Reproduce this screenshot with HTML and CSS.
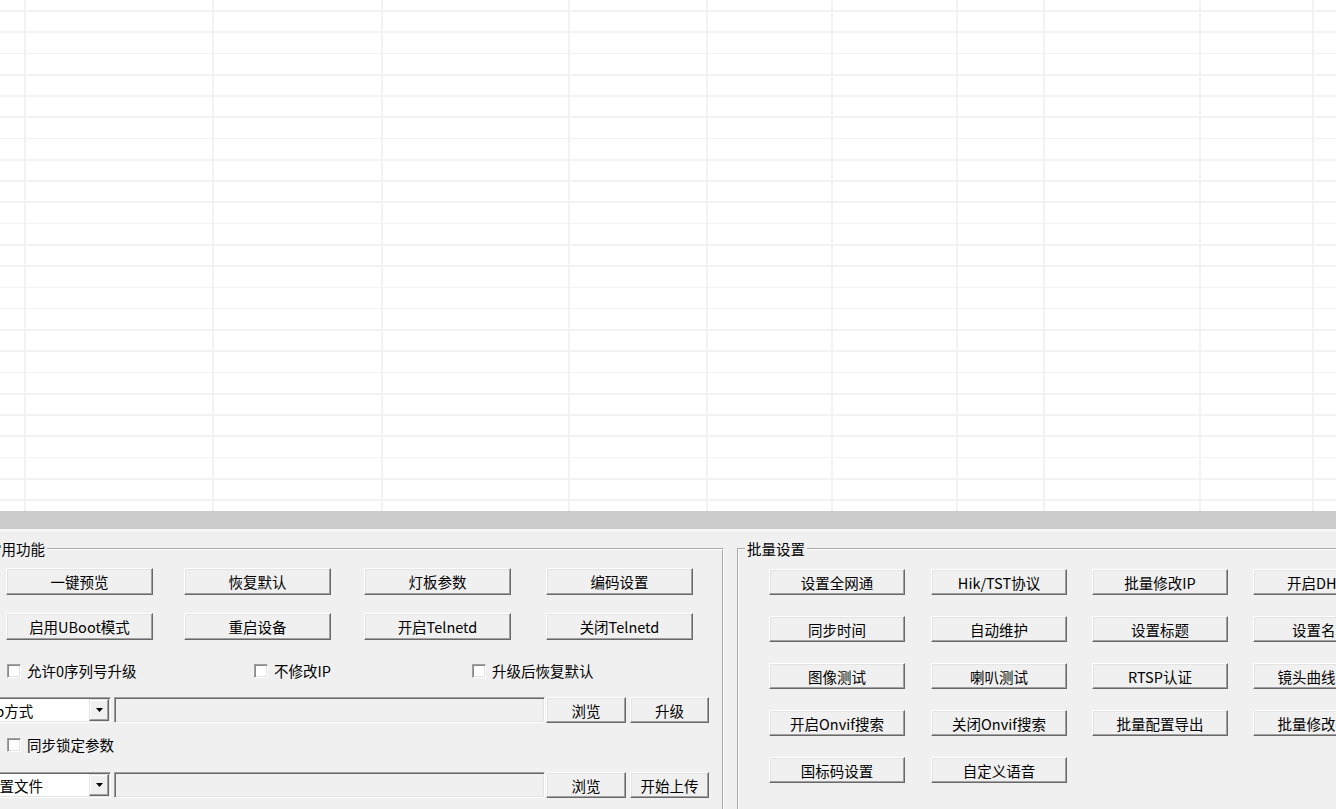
FILE: index.html
```html
<!DOCTYPE html>
<html lang="zh-CN">
<head>
<meta charset="utf-8">
<title>批量设置</title>
<link rel="stylesheet" href="styles.css">
</head>
<body>
<div class="app">
  <div class="list">
    <div class="col c1"></div>
    <div class="col c2"></div>
    <div class="col c3"></div>
    <div class="col c4"></div>
    <div class="col c5"></div>
    <div class="col c6"></div>
    <div class="col c7"></div>
    <div class="col c8"></div>
    <div class="col c9"></div>
    <div class="col c10"></div>
    <div class="col c11"></div>
  </div>
  <div class="splitter"></div>
  <div class="panel">
    <fieldset class="group group-common">
      <legend>常用功能</legend>
      <div class="common-grid">
        <button class="btn">一键预览</button>
        <button class="btn">恢复默认</button>
        <button class="btn">灯板参数</button>
        <button class="btn">编码设置</button>
        <button class="btn">启用UBoot模式</button>
        <button class="btn">重启设备</button>
        <button class="btn">开启Telnetd</button>
        <button class="btn">关闭Telnetd</button>
      </div>
      <div class="check-row check-row-top">
        <label class="check"><input type="checkbox" class="box">允许0序列号升级</label>
        <label class="check"><input type="checkbox" class="box">不修改IP</label>
        <label class="check"><input type="checkbox" class="box">升级后恢复默认</label>
      </div>
      <div class="file-row file-row-upgrade">
        <div class="combo"><span class="combo-text">ftp方式</span><span class="combo-btn"><svg width="7" height="4" viewBox="0 0 7 4"><path d="M0 0H7L3.5 4Z" fill="#000"/></svg></span></div>
        <div class="field"></div>
        <button class="btn btn-browse">浏览</button>
        <button class="btn btn-action">升级</button>
      </div>
      <div class="check-row check-row-lock">
        <label class="check"><input type="checkbox" class="box">同步锁定参数</label>
      </div>
      <div class="file-row file-row-upload">
        <div class="combo"><span class="combo-text">配置文件</span><span class="combo-btn"><svg width="7" height="4" viewBox="0 0 7 4"><path d="M0 0H7L3.5 4Z" fill="#000"/></svg></span></div>
        <div class="field"></div>
        <button class="btn btn-browse">浏览</button>
        <button class="btn btn-action">开始上传</button>
      </div>
    </fieldset>
    <fieldset class="group group-batch">
      <legend>批量设置</legend>
      <div class="batch-grid">
        <button class="btn">设置全网通</button>
        <button class="btn">Hik/TST协议</button>
        <button class="btn">批量修改IP</button>
        <button class="btn">开启DHCP</button>
        <button class="btn">同步时间</button>
        <button class="btn">自动维护</button>
        <button class="btn">设置标题</button>
        <button class="btn">设置名称</button>
        <button class="btn">图像测试</button>
        <button class="btn">喇叭测试</button>
        <button class="btn">RTSP认证</button>
        <button class="btn">镜头曲线校正</button>
        <button class="btn">开启Onvif搜索</button>
        <button class="btn">关闭Onvif搜索</button>
        <button class="btn">批量配置导出</button>
        <button class="btn">批量修改密码</button>
        <button class="btn">国标码设置</button>
        <button class="btn">自定义语音</button>
      </div>
    </fieldset>
  </div>
</div>
</body>
</html>
```

FILE: styles.css
```css
html, body {
  margin: 0;
  padding: 0;
}

body {
  width: 1336px;
  height: 809px;
  overflow: hidden;
  background: #f0f0f0;
  color: #000;
  font-family: "Noto Sans CJK SC", "Noto Sans", sans-serif;
  font-size: 14.5px;
  line-height: 17px;
}

.app {
  width: 1336px;
  height: 809px;
  overflow: hidden;
}

/* ---------- list view ---------- */
.list {
  height: 511px;
  display: flex;
  background-color: #ffffff;
  background-image: repeating-linear-gradient(
    to bottom,
    #f2f2f2 -11.27px,
    #f2f2f2 -9.57px,
    transparent -9.57px,
    transparent 10px
  );
}

.col {
  flex: none;
  box-sizing: border-box;
  border-right: 2px solid #f2f2f2;
}

.c1 { width: 26px; }
.c2 { width: 188px; }
.c3 { width: 169px; }
.c4 { width: 187px; }
.c5 { width: 138px; }
.c6 { width: 125px; }
.c7 { width: 125px; }
.c8 { width: 87px; }
.c9 { width: 156px; }
.c10 { width: 113px; }
.c11 { flex: 1; border-right: none; }

/* ---------- splitter ---------- */
.splitter {
  height: 18px;
  background: #cbcbcb;
}

/* ---------- bottom panel ---------- */
.panel {
  display: flex;
  align-items: flex-start;
  height: 280px;
  box-sizing: border-box;
  border-top: 3px solid #f6f6f6;
  padding-top: 8px;
  overflow: hidden;
}

.group {
  flex: none;
  margin: 0;
  padding: 0;
  min-width: 0;
  box-sizing: border-box;
  height: 420px;
  border: 2px groove #ffffff;
}

.group legend {
  margin-left: 6px;
  padding: 0 2px;
  line-height: 17px;
  height: 17px;
}

.group-common {
  width: 747px;
  margin-left: -23px;
}

.group-batch {
  width: 800px;
  margin-left: 13px;
}

/* ---------- buttons ---------- */
.btn {
  box-sizing: border-box;
  height: 27px;
  margin: 0;
  padding: 0;
  font: inherit;
  color: #000;
  background: #f0f0f0;
  border: 1px solid;
  border-color: #ffffff #696969 #696969 #ffffff;
  box-shadow: inset -1px -1px 0 #a0a0a0, inset 1px 1px 0 #e3e3e3;
  border-radius: 0;
  white-space: nowrap;
  overflow: hidden;
  text-align: center;
}

.common-grid {
  display: grid;
  grid-template-columns: 178px 180px 182px 147px;
  grid-auto-rows: 27px;
  row-gap: 18px;
  margin-top: 11px;
  padding-left: 27px;
}

.common-grid .btn {
  width: 147px;
}

.batch-grid {
  display: grid;
  grid-template-columns: 162px 161px 161px 136px;
  grid-auto-rows: 26px;
  row-gap: 21px;
  margin-top: 12px;
  padding-left: 30px;
}

.batch-grid .btn {
  width: 136px;
  height: 26px;
}

/* ---------- check boxes ---------- */
.check-row {
  display: grid;
  grid-template-columns: 247px 218px auto;
  height: 17px;
  padding-left: 28px;
}

.check-row-top {
  margin-top: 22px;
}

.check-row-lock {
  margin-top: 13px;
}

.check {
  display: flex;
  align-items: center;
  white-space: nowrap;
}

.box {
  appearance: none;
  -webkit-appearance: none;
  flex: none;
  box-sizing: border-box;
  width: 14px;
  height: 14px;
  margin: 0 6px 0 0;
  background: #ffffff;
  border: 1px solid;
  border-color: #a0a0a0 #ffffff #ffffff #a0a0a0;
  box-shadow: inset 1px 1px 0 #8a8a8a, inset -1px -1px 0 #e3e3e3;
}

/* ---------- file rows ---------- */
.file-row {
  display: flex;
  align-items: stretch;
  height: 26px;
  padding-left: 4px;
}

.file-row-upgrade {
  margin-top: 18px;
}

.file-row-upload {
  margin-top: 19px;
}

.combo {
  flex: none;
  display: flex;
  align-items: center;
  box-sizing: border-box;
  width: 128px;
  padding: 1px;
  background: #ffffff;
  border: 1px solid;
  border-color: #a0a0a0 #ffffff #ffffff #a0a0a0;
  box-shadow: inset 1px 1px 0 #696969, inset -1px -1px 0 #e3e3e3;
}

.combo-text {
  flex: 1;
  white-space: nowrap;
  overflow: hidden;
}

.combo-btn {
  flex: none;
  display: flex;
  align-items: center;
  justify-content: center;
  box-sizing: border-box;
  width: 20px;
  height: 22px;
  background: #f0f0f0;
  border: 1px solid;
  border-color: #e3e3e3 #696969 #696969 #e3e3e3;
  box-shadow: inset -1px -1px 0 #a0a0a0, inset 1px 1px 0 #ffffff;
}

.field {
  flex: none;
  box-sizing: border-box;
  width: 431px;
  margin-left: 3px;
  background: #f0f0f0;
  border: 1px solid;
  border-color: #a0a0a0 #ffffff #ffffff #a0a0a0;
  box-shadow: inset 1px 1px 0 #696969, inset -1px -1px 0 #e3e3e3;
}

.file-row .btn {
  height: 26px;
}

.btn-browse {
  width: 80px;
  margin-left: 1px;
}

.btn-action {
  width: 79px;
  margin-left: 4px;
}
```
